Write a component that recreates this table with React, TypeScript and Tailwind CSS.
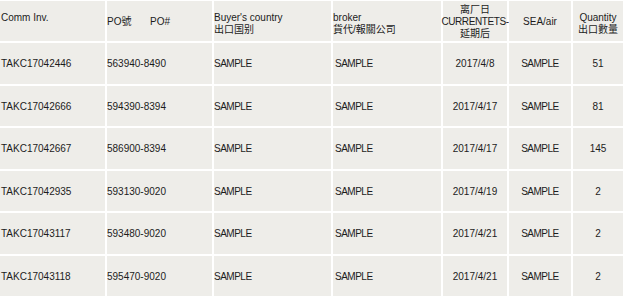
import React from 'react';

const ROWS = [
  { inv: 'TAKC17042446', po: '563940-8490', date: '2017/4/8', qty: '51' },
  { inv: 'TAKC17042666', po: '594390-8394', date: '2017/4/17', qty: '81' },
  { inv: 'TAKC17042667', po: '586900-8394', date: '2017/4/17', qty: '145' },
  { inv: 'TAKC17042935', po: '593130-9020', date: '2017/4/19', qty: '2' },
  { inv: 'TAKC17043117', po: '593480-9020', date: '2017/4/21', qty: '2' },
  { inv: 'TAKC17043118', po: '595470-9020', date: '2017/4/21', qty: '2' },
];

const cell = 'flex bg-[#eeede9] leading-[12px]';
const row = 'items-center pt-[2px]';
const sample = 'tracking-[-0.5px]';

export default function App() {
  return (
    <div
      className="h-[298px] w-[625px] bg-white pt-px text-[10px] text-[#1c1c1c]"
      style={{ fontFamily: '"Liberation Sans", "Noto Sans CJK SC", sans-serif' }}
    >
      <div className="grid w-[623px] grid-cols-[105px_105px_117px_108px_64px_62px_50px] grid-rows-[40px_repeat(6,40.5px)] gap-[2px]">
        <div className={`${cell} items-start pl-px pt-[11px]`}>Comm Inv.</div>
        <div className={`${cell} items-center pt-px`}>
          <span className="w-[43px]">PO號</span>
          <span>PO#</span>
        </div>
        <div className={`${cell} flex-col pt-[11px]`}>
          <span>Buyer's country</span>
          <span>出口国别</span>
        </div>
        <div className={`${cell} flex-col pt-[11px]`}>
          <span>broker</span>
          <span>貨代/報關公司</span>
        </div>
        <div className={`${cell} flex-col items-center pt-[3px] text-center`}>
          <span>离厂日</span>
          <span className="tracking-[-0.4px]">CURRENTETS-</span>
          <span>延期后</span>
        </div>
        <div className={`${cell} items-center justify-center pt-px`}>SEA/air</div>
        <div className={`${cell} flex-col items-center pt-[11px]`}>
          <span>Quantity</span>
          <span>出口數量</span>
        </div>

        {ROWS.map((r) => (
          <React.Fragment key={r.inv}>
            <div className={`${cell} ${row} pl-px`}>{r.inv}</div>
            <div className={`${cell} ${row}`}>{r.po}</div>
            <div className={`${cell} ${row} ${sample}`}>SAMPLE</div>
            <div className={`${cell} ${row} pl-[2px] ${sample}`}>SAMPLE</div>
            <div className={`${cell} ${row} justify-center`}>{r.date}</div>
            <div className={`${cell} ${row} justify-center ${sample}`}>SAMPLE</div>
            <div className={`${cell} ${row} justify-center`}>{r.qty}</div>
          </React.Fragment>
        ))}
      </div>
    </div>
  );
}
